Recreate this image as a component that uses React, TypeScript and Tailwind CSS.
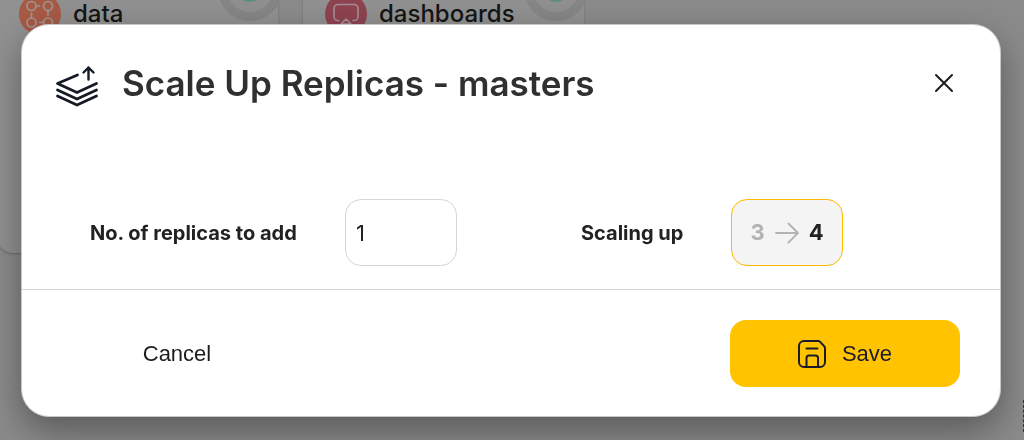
import React, { useState } from "react";

function ScaleIcon() {
  return (
    <svg viewBox="0 0 48 48" className="size-12 shrink-0" fill="none" stroke="#141b24" strokeWidth="2.8" strokeLinecap="round" strokeLinejoin="round" aria-hidden="true">
      <path d="M23.5 16 3.5 24.500l19.500 9 19.500-9" />
      <path d="M3.500 31 23 40l19.500-9" />
      <path d="M3.500 37 23 46l19.500-9" />
      <path d="M34.500 20.500V8.500M29.500 13.500l5-5 5 5" strokeWidth="2.400" />
    </svg>
  );
}

function SaveIcon() {
  return (
    <svg viewBox="0 0 28 28" className="size-7 shrink-0" fill="none" stroke="#1b1b2b" strokeWidth="2" strokeLinecap="round" strokeLinejoin="round" aria-hidden="true">
      <path d="M6 1h14.500a2 2 0 0 1 1.400.6L26 6a3 3 0 0 1 1 2.200V22a5 5 0 0 1-5 5H6a5 5 0 0 1-5-5V6a5 5 0 0 1 5-5Z" />
      <path d="M8.500 8.500h11" />
      <path d="M8.500 26.500V18a2.500 2.500 0 0 1 2.500-2.500h6.500a2.500 2.500 0 0 1 2.500 2.500v8.500" />
    </svg>
  );
}

function CloseIcon() {
  return (
    <svg viewBox="0 0 28 28" className="size-7" fill="none" stroke="#1c1c1c" strokeWidth="2" strokeLinecap="round" aria-hidden="true">
      <path d="M6 6l16 16M22 6 6 22" />
    </svg>
  );
}

function ArrowIcon() {
  return (
    <svg viewBox="0 0 24 22" className="h-[22px] w-6" fill="none" stroke="#b3b3b3" strokeWidth="1.800" strokeLinecap="round" strokeLinejoin="round" aria-hidden="true">
      <path d="M1 11h22M13.500 1.500 23 11l-9.500 9.500" />
    </svg>
  );
}

function DataIcon() {
  return (
    <svg viewBox="0 0 42 42" className="size-[42px] shrink-0" aria-hidden="true">
      <circle cx="21" cy="21" r="21" fill="#a85a45" />
      <g fill="none" stroke="#9c9793" strokeWidth="1.700" strokeLinecap="round">
        <circle cx="12.500" cy="13" r="4.500" />
        <circle cx="29" cy="13" r="4.500" />
        <circle cx="12.500" cy="29.500" r="4.500" />
        <circle cx="29" cy="29.500" r="4.500" />
        <path d="M17 13h3.500M29 17.500v4.500M12.500 25v-5M24.500 29.500h-4" />
      </g>
    </svg>
  );
}

function DashboardIcon() {
  return (
    <svg viewBox="0 0 42 42" className="size-[42px] shrink-0" aria-hidden="true">
      <circle cx="21" cy="21" r="21" fill="#8f4350" />
      <g fill="none" stroke="#a39095" strokeWidth="1.600" strokeLinecap="round" strokeLinejoin="round">
        <path d="M14 27.500h-1a4 4 0 0 1-4-4v-8a4 4 0 0 1 4-4h16a4 4 0 0 1 4 4v8a4 4 0 0 1-4 4h-1" />
        <path d="M16 31l5-5 5 5Z" />
      </g>
    </svg>
  );
}

function StatusRing() {
  return (
    <svg viewBox="0 0 64 74" className="-ml-3 h-[74px] w-16 shrink-0" aria-hidden="true">
      <circle cx="36" cy="28" r="27.500" fill="#909090" stroke="#868686" strokeWidth="9" />
      <circle cx="36" cy="28" r="13" fill="#5d8f7c" />
    </svg>
  );
}

function NodeCard({ name, icon }: { name: string; icon: React.ReactNode }) {
  return (
    <article className="h-[302px] w-[281px] shrink-0 rounded-2xl bg-[#919191] shadow-[0_1px_2px_#6a6a6a]">
      <header className="flex items-end gap-3 pt-[10px] pl-[22px]">
        {icon}
        <h2 className="flex-1 text-2xl leading-[42px] font-medium whitespace-nowrap text-[#151515]">{name}</h2>
        <StatusRing />
      </header>
    </article>
  );
}

export default function App() {
  const [count, setCount] = useState("1");
  const current = 3;
  const target = current + (Number(count) || 0);

  return (
    <div className="min-h-screen overflow-hidden bg-[#8b8b8b] font-[Inter,sans-serif] text-[#222]">
      <main className="-mt-[49px] -ml-[3px] flex gap-[25px]">
        <NodeCard name="data" icon={<DataIcon />} />
        <NodeCard name="dashboards" icon={<DashboardIcon />} />
      </main>
      <div className="fixed right-0 bottom-2 h-8 border-r border-dashed border-[#333]" />

      <div className="fixed inset-0 pt-6 pr-[23px] pl-[21px]">
        <section
          role="dialog"
          aria-modal="true"
          aria-labelledby="dialog-title"
          className="rounded-[28px] border border-[#c8c8c8] bg-white shadow-[0_14px_36px_rgba(0,0,0,0.36)]"
        >
          <header className="flex items-center gap-5 pt-8 pr-[42px] pl-8">
            <ScaleIcon />
            <h1 id="dialog-title" className="flex-1 text-[35px] leading-[52px] font-semibold text-[#303030]">
              Scale Up Replicas - masters
            </h1>
            <button type="button" aria-label="Close">
              <CloseIcon />
            </button>
          </header>

          <div className="grid grid-cols-2 pt-[90px] pb-[23px]">
            <div className="flex items-center pl-[68px]">
              <label htmlFor="replicas" className="w-[255px] text-xl font-bold whitespace-nowrap">
                No. of replicas to add
              </label>
              <input
                id="replicas"
                type="text"
                inputMode="numeric"
                value={count}
                onChange={(e) => setCount(e.target.value)}
                className="h-[67px] w-28 rounded-2xl border border-[#d6d6d6] bg-white px-[10px] text-[22px] outline-none"
              />
            </div>
            <div className="flex items-center pl-[70px]">
              <span className="w-[150px] text-xl font-bold whitespace-nowrap">Scaling up</span>
              <output
                htmlFor="replicas"
                className="flex h-[67px] w-28 items-center justify-center gap-[10px] rounded-2xl border border-[#ffb900] bg-[#f4f4f4] text-[22px] font-bold"
              >
                <span className="text-[#b3b3b3]">{current}</span>
                <ArrowIcon />
                <span>{target}</span>
              </output>
            </div>
          </div>

          <footer className="flex justify-between border-t border-[#d6d6d6] px-10 pt-[30px] pb-[29px] font-['Liberation_Sans',sans-serif] text-[22px]">
            <button type="button" className="h-[67px] w-[230px] text-[#1c1c1c]">
              Cancel
            </button>
            <button
              type="button"
              className="flex h-[67px] w-[230px] items-center justify-center gap-4 rounded-2xl bg-[#ffc300] text-[#1b1b2b]"
            >
              <SaveIcon />
              Save
            </button>
          </footer>
        </section>
      </div>
    </div>
  );
}
